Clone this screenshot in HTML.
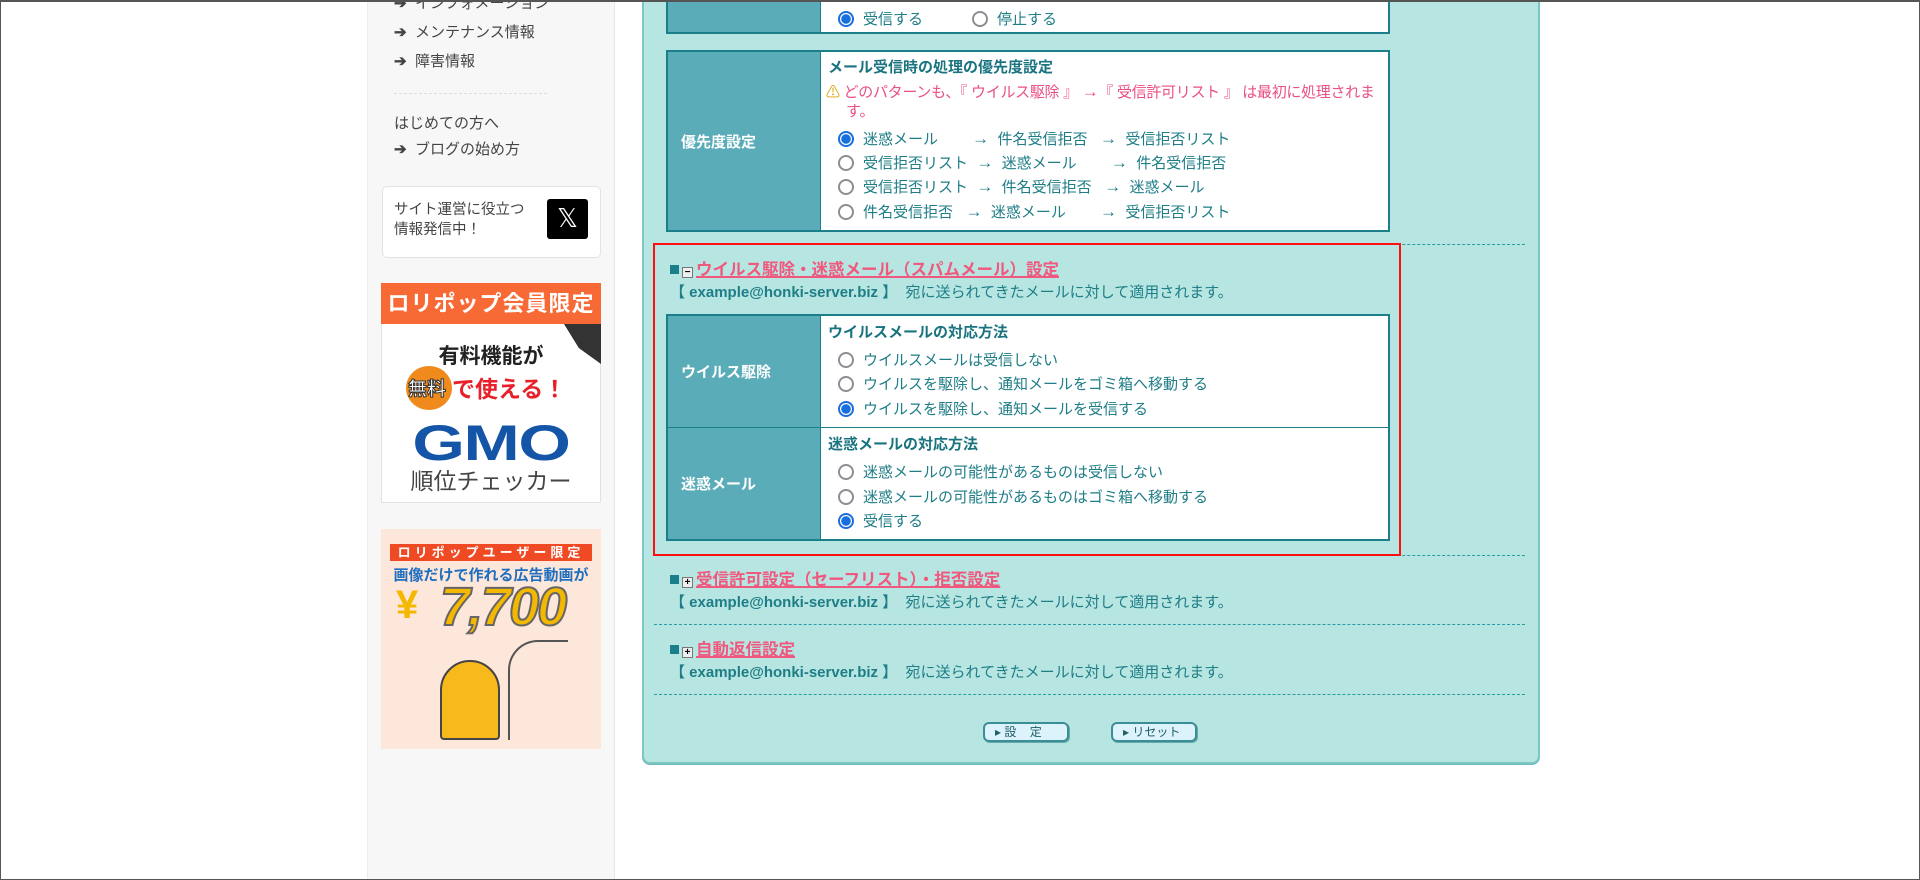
<!DOCTYPE html>
<html><head><meta charset="utf-8"><style>
*{margin:0;padding:0;box-sizing:border-box}
body{width:1920px;height:880px;position:relative;overflow:hidden;background:#fff;font-family:"Liberation Sans","Noto Sans CJK JP",sans-serif;font-size:15px;color:#1e7d86}
.frame{position:absolute;left:0;top:0;width:1920px;height:880px;border:1px solid #555;border-top:2px solid #555;z-index:50;pointer-events:none}
.side{position:absolute;left:367px;top:0;width:248px;height:880px;background:#f7f7f7;border-left:1px solid #ececec;border-right:1px solid #e6e6e6}
.sl{position:absolute;left:394px;color:#444;font-size:15px;white-space:nowrap}
.sl b{display:inline-block;width:21px;font-weight:bold;color:#444}
.ab{position:absolute}
.main{position:absolute;left:642px;top:-10px;width:898px;height:774px;background:#b7e6e2;border:2px solid #7cc6c4;border-top:none;border-radius:0 0 8px 8px;box-shadow:0 1px 0 #6fb9b8}
.tbl{position:absolute;left:666px;width:724px;background:#fff;border:2px solid #1a7f8a}
.lab{position:absolute;left:0;top:0;bottom:0;width:153px;background:#5aacb8;border-right:1px solid #1a7f8a;color:#fff;font-weight:bold;display:flex;align-items:center;padding-left:13px;font-size:15px}
.t{position:absolute;white-space:nowrap;color:#1e7d86}
.r{display:inline-block;width:16px;height:16px;border-radius:50%;border:2px solid #8d8d95;background:#fff;vertical-align:-3px;margin-right:9px}
.r.on{border:2px solid #1a6fe0;background:radial-gradient(circle,#1a6fe0 0 4.5px,#fff 5px)}
.h{font-weight:bold;color:#1a7480}
.dot{position:absolute;height:0;border-top:1px dashed #2a9aa4}
.sec{position:absolute;left:670px;white-space:nowrap;font-weight:bold;color:#f0587e;font-size:16.5px}
.sec .sq{display:inline-block;width:9px;height:9px;background:#1a7f8a;margin-right:3px;vertical-align:1px}
.sec .bx{display:inline-block;width:11px;height:11px;border:1px solid #777;background:#eee;margin-right:3px;vertical-align:0;font-size:10px;line-height:9px;text-align:center;color:#000}
.sec u{text-decoration:underline;text-decoration-thickness:2px}
.em{position:absolute;left:670px;white-space:nowrap}
.ar{font-size:17px}
.btn{position:absolute;top:722px;width:86px;height:20px;border:2px solid #3b8d96;border-radius:6px;background:#dcf3fb;font-size:12px;color:#1e5c66;line-height:16px;padding-left:10px;box-shadow:1px 1px 0 #6aa}
</style></head><body>
<div class="side"></div>
<div class="sl" style="top:-8px"><b>➔</b>インフォメーション</div>
<div class="sl" style="top:21px"><b>➔</b>メンテナンス情報</div>
<div class="sl" style="top:50px"><b>➔</b>障害情報</div>
<div class="ab" style="left:394px;top:93px;width:153px;border-top:1px dashed #ddd"></div>
<div class="sl" style="top:112px">はじめての方へ</div>
<div class="sl" style="top:138px"><b>➔</b>ブログの始め方</div>
<div class="ab" style="left:382px;top:186px;width:219px;height:72px;background:#fff;border:1px solid #e3e3e3;border-radius:5px"></div>
<div class="ab" style="left:394px;top:200px;color:#444;font-size:14.5px;line-height:20px">サイト運営に役立つ<br>情報発信中！</div>
<div class="ab" style="left:547px;top:199px;width:41px;height:40px;background:#000;border-radius:3px;color:#fff;font-size:26px;text-align:center;line-height:40px;font-family:'DejaVu Sans',sans-serif">𝕏</div>
<!-- banner1 -->
<div class="ab" style="left:381px;top:283px;width:220px;height:220px;background:#fff;border:1px solid #e2e2e2"></div>
<div class="ab" style="left:381px;top:283px;width:220px;height:41px;background:#f86a35;color:#fff;font-weight:bold;font-size:22px;text-align:center;line-height:41px;letter-spacing:1px">ロリポップ会員限定</div>
<div class="ab" style="left:564px;top:324px;width:37px;height:40px;background:#333;clip-path:polygon(0 0,100% 0,100% 100%,40% 60%)"></div>
<div class="ab" style="left:381px;top:340px;width:220px;text-align:center;font-weight:bold;font-size:21px;color:#222">有料機能が</div>
<div class="ab" style="left:406px;top:366px;width:46px;height:44px;background:#f08a1c;border-radius:50%"></div>
<div class="ab" style="left:408px;top:374px;font-weight:bold;font-size:19px;color:#fff;-webkit-text-stroke:1px #333">無料</div>
<div class="ab" style="left:452px;top:370px;font-weight:bold;font-size:23px;color:#e8202a">で使える！</div>
<div class="ab" style="left:381px;top:418px;width:220px;text-align:center;font-weight:900;font-size:50px;color:#1555a8;line-height:50px;letter-spacing:-1px;transform:scaleX(1.35)">GMO</div>
<div class="ab" style="left:381px;top:462px;width:220px;text-align:center;font-size:23px;color:#444">順位チェッカー</div>
<!-- banner2 -->
<div class="ab" style="left:381px;top:529px;width:220px;height:220px;background:#fde6da"></div>
<div class="ab" style="left:390px;top:544px;width:202px;height:17px;background:#f04a24;color:#fff;font-weight:bold;font-size:13px;text-align:center;line-height:17px;letter-spacing:4px">ロリポップユーザー限定</div>
<div class="ab" style="left:381px;top:564px;width:220px;text-align:center;font-weight:bold;font-size:15px;color:#1e6fc0">画像だけで作れる広告動画が</div>
<div class="ab" style="left:396px;top:583px;font-weight:bold;font-size:40px;color:#f5b800">¥</div>
<div class="ab" style="left:440px;top:576px;font-weight:900;font-size:54px;font-style:italic;color:#f5b800;-webkit-text-stroke:2px #666;letter-spacing:-2px">7,700</div>
<div class="ab" style="left:440px;top:660px;width:60px;height:80px;border:2px solid #444;border-radius:30px 30px 4px 4px;background:#f7b91b"></div>
<div class="ab" style="left:508px;top:640px;width:60px;height:100px;border-left:2px solid #555;border-top:2px solid #555;border-radius:30px 0 0 0"></div>
<!-- main -->
<div class="main"></div>
<div class="tbl" style="top:-4px;height:38px"><div class="lab"></div></div>
<div class="t" style="left:838px;top:8px"><span class="r on"></span>受信する</div>
<div class="t" style="left:972px;top:8px"><span class="r"></span>停止する</div>

<div class="tbl" style="top:50px;height:182px"><div class="lab">優先度設定</div></div>
<div class="t h" style="left:828px;top:56px">メール受信時の処理の優先度設定</div>
<div class="t" style="left:826px;top:81px;color:#ea4f86;letter-spacing:-0.3px"><span style="color:#d8a000;font-size:14px">⚠</span> どのパターンも、『 ウイルス駆除 』 <span class="ar">→</span>『 受信許可リスト 』 は最初に処理されま</div>
<div class="t" style="left:846px;top:100px;color:#ea4f86">す。</div>
<div class="t" style="left:838px;top:128px"><span class="r on"></span>迷惑メール　　 <span class="ar">→</span>&nbsp;&nbsp;件名受信拒否&nbsp;&nbsp; <span class="ar">→</span>&nbsp;&nbsp;受信拒否リスト</div>
<div class="t" style="left:838px;top:152px"><span class="r"></span>受信拒否リスト&nbsp;&nbsp;<span class="ar">→</span>&nbsp;&nbsp;迷惑メール　　 <span class="ar">→</span>&nbsp;&nbsp;件名受信拒否</div>
<div class="t" style="left:838px;top:176px"><span class="r"></span>受信拒否リスト&nbsp;&nbsp;<span class="ar">→</span>&nbsp;&nbsp;件名受信拒否&nbsp;&nbsp; <span class="ar">→</span>&nbsp;&nbsp;迷惑メール</div>
<div class="t" style="left:838px;top:201px"><span class="r"></span>件名受信拒否&nbsp;&nbsp; <span class="ar">→</span>&nbsp;&nbsp;迷惑メール　　 <span class="ar">→</span>&nbsp;&nbsp;受信拒否リスト</div>

<div class="dot" style="left:654px;top:244px;width:871px"></div>
<div class="ab" style="left:653px;top:243px;width:748px;height:313px;border:2px solid #ff1010;z-index:5"></div>
<div class="sec" style="top:256px"><span class="sq"></span><span class="bx">−</span><u>ウイルス駆除・迷惑メール（スパムメール）設定</u></div>
<div class="em" style="top:281px"><b>【 example@honki-server.biz 】</b>&nbsp; 宛に送られてきたメールに対して適用されます。</div>

<div class="tbl" style="top:314px;height:227px"><div class="lab" style="bottom:auto;height:112px;border-bottom:1px solid #1a7f8a">ウイルス駆除</div><div class="lab" style="top:112px">迷惑メール</div><div class="ab" style="left:153px;right:0;top:111px;border-top:1px solid #1a7f8a"></div></div>
<div class="t h" style="left:828px;top:321px">ウイルスメールの対応方法</div>
<div class="t" style="left:838px;top:349px"><span class="r"></span>ウイルスメールは受信しない</div>
<div class="t" style="left:838px;top:373px"><span class="r"></span>ウイルスを駆除し、通知メールをゴミ箱へ移動する</div>
<div class="t" style="left:838px;top:398px"><span class="r on"></span>ウイルスを駆除し、通知メールを受信する</div>
<div class="t h" style="left:828px;top:433px">迷惑メールの対応方法</div>
<div class="t" style="left:838px;top:461px"><span class="r"></span>迷惑メールの可能性があるものは受信しない</div>
<div class="t" style="left:838px;top:486px"><span class="r"></span>迷惑メールの可能性があるものはゴミ箱へ移動する</div>
<div class="t" style="left:838px;top:510px"><span class="r on"></span>受信する</div>

<div class="dot" style="left:654px;top:555px;width:871px"></div>
<div class="sec" style="top:566px"><span class="sq"></span><span class="bx">+</span><u>受信許可設定（セーフリスト）・拒否設定</u></div>
<div class="em" style="top:591px"><b>【 example@honki-server.biz 】</b>&nbsp; 宛に送られてきたメールに対して適用されます。</div>
<div class="dot" style="left:654px;top:624px;width:871px"></div>
<div class="sec" style="top:636px"><span class="sq"></span><span class="bx">+</span><u>自動返信設定</u></div>
<div class="em" style="top:661px"><b>【 example@honki-server.biz 】</b>&nbsp; 宛に送られてきたメールに対して適用されます。</div>
<div class="dot" style="left:654px;top:694px;width:871px"></div>
<div class="btn" style="left:983px">▸ 設&nbsp;&nbsp;&nbsp;&nbsp;定</div>
<div class="btn" style="left:1111px">▸ リセット</div>
<div class="frame"></div>
</body></html>
